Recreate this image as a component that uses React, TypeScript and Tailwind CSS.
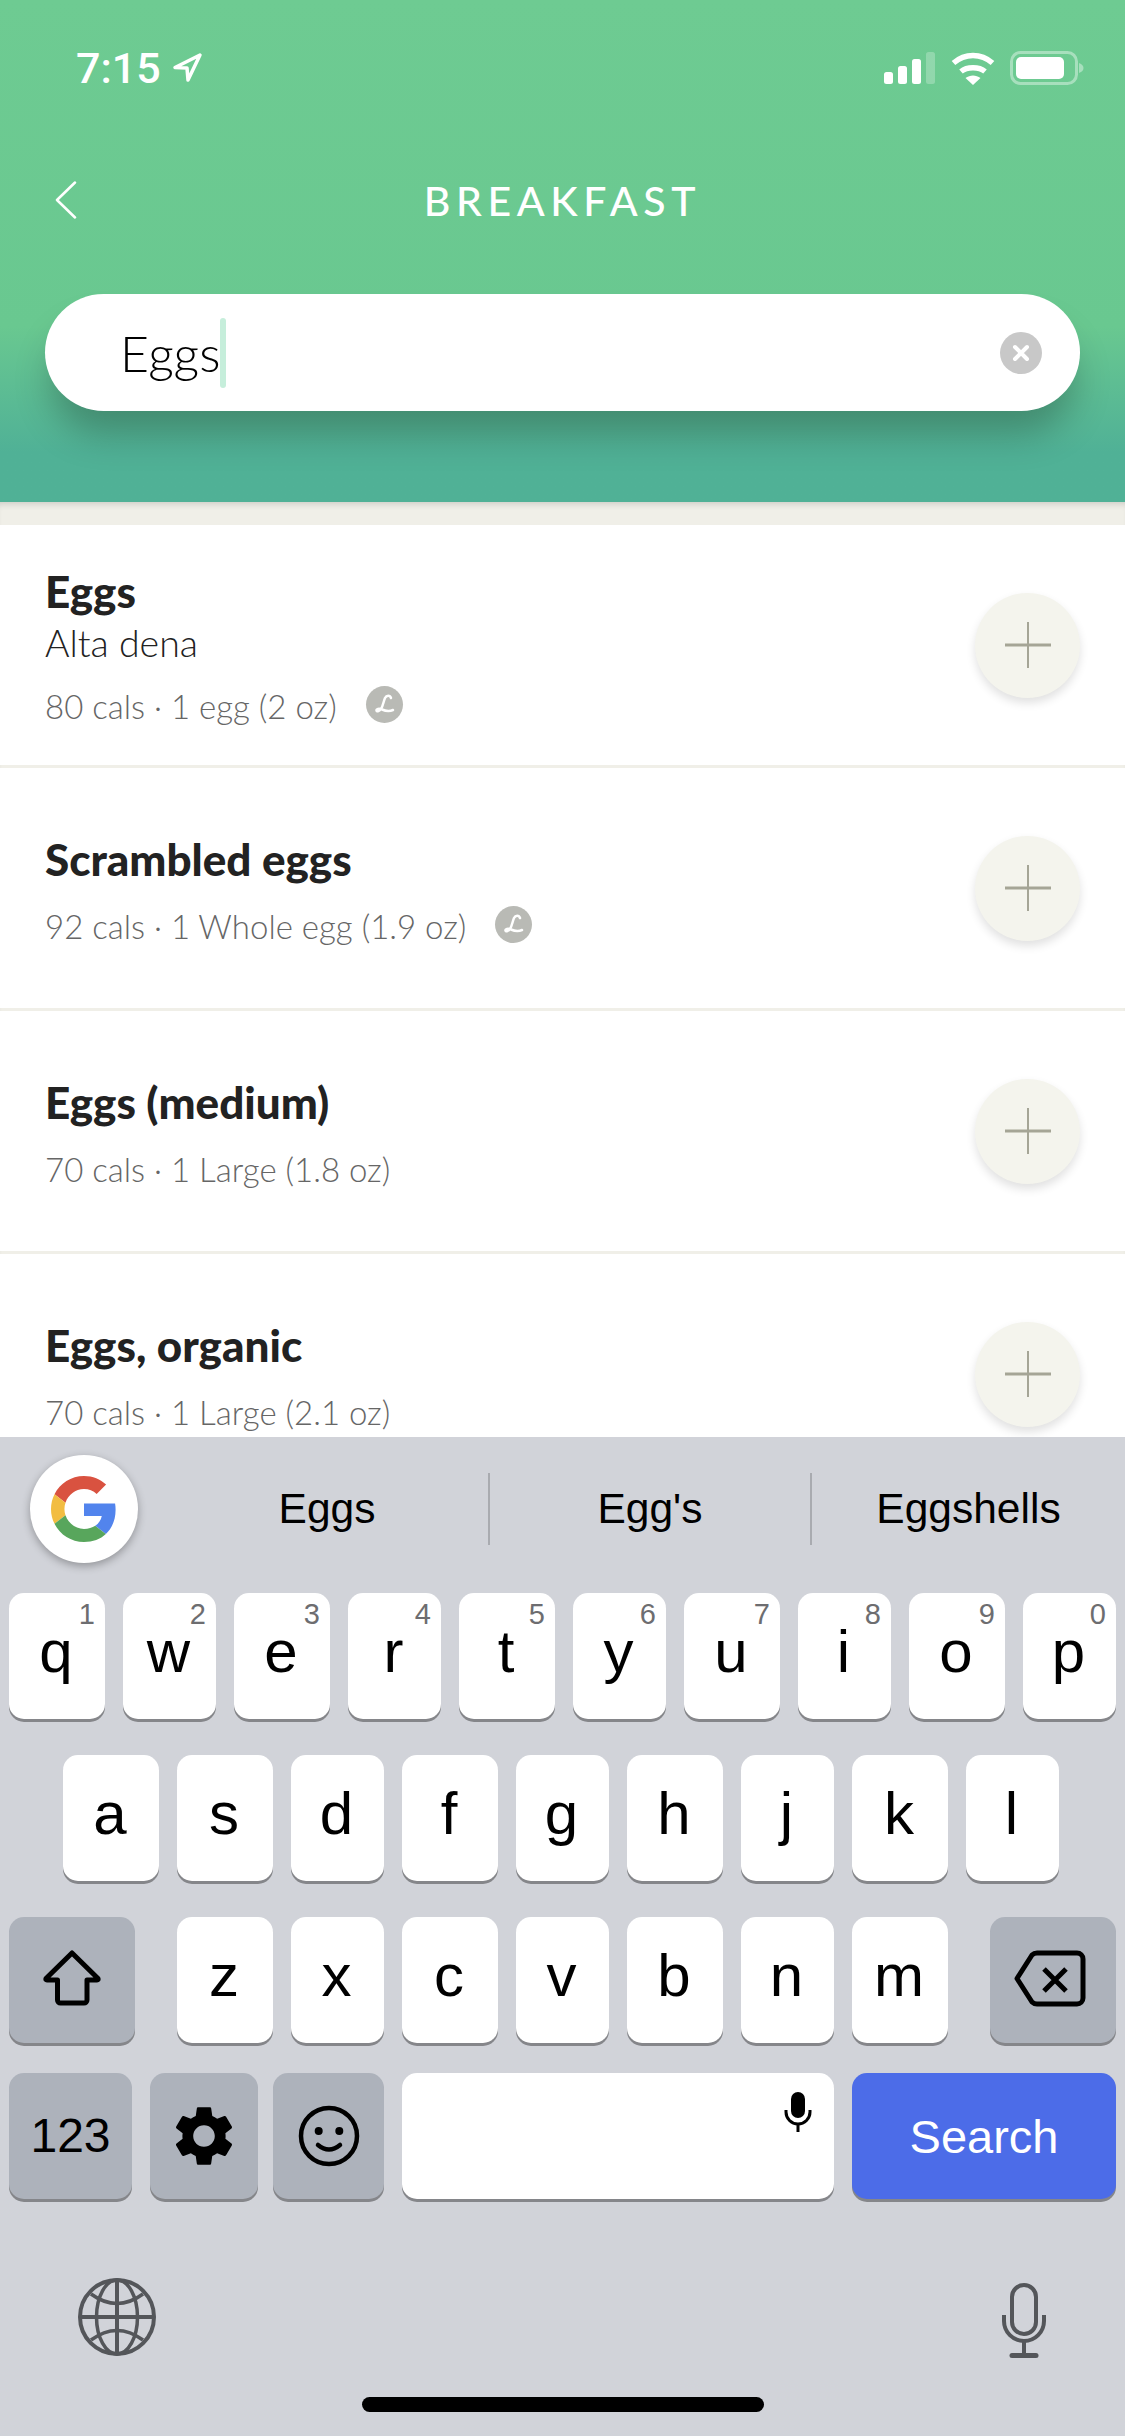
import React from 'react';

interface Food {
  name: string;
  brand?: string;
  detail: string;
  verified?: boolean;
}

const foods: Food[] = [
  { name: 'Eggs', brand: 'Alta dena', detail: '80 cals · 1 egg (2 oz)', verified: true },
  { name: 'Scrambled eggs', detail: '92 cals · 1 Whole egg (1.9 oz)', verified: true },
  { name: 'Eggs (medium)', detail: '70 cals · 1 Large (1.8 oz)' },
  { name: 'Eggs, organic', detail: '70 cals · 1 Large (2.1 oz)' },
];

const topRow: [string, string, string][] = [
  ['q', '1', 'w-[96px]'],
  ['w', '2', 'w-[93px]'],
  ['e', '3', 'w-[96px]'],
  ['r', '4', 'w-[93px]'],
  ['t', '5', 'w-[96px]'],
  ['y', '6', 'w-[93px]'],
  ['u', '7', 'w-[96px]'],
  ['i', '8', 'w-[93px]'],
  ['o', '9', 'w-[96px]'],
  ['p', '0', 'w-[93px]'],
];

const middleRow: [string, string][] = [
  ['a', 'w-[96px]'],
  ['s', 'w-[96px]'],
  ['d', 'w-[93px]'],
  ['f', 'w-[96px]'],
  ['g', 'w-[93px]'],
  ['h', 'w-[96px]'],
  ['j', 'w-[93px]'],
  ['k', 'w-[96px]'],
  ['l', 'w-[93px]'],
];

const bottomRow: [string, string][] = [
  ['z', 'w-[96px]'],
  ['x', 'w-[93px]'],
  ['c', 'w-[96px]'],
  ['v', 'w-[93px]'],
  ['b', 'w-[96px]'],
  ['n', 'w-[93px]'],
  ['m', 'w-[96px]'],
];

function StatusBar() {
  return (
    <div className="flex h-[136px] items-center justify-between pl-[76px] pr-[41px] text-white">
      <div className="flex items-center gap-[11px]">
        <span className="font-['Roboto',sans-serif] text-[43px] font-medium leading-none">7:15</span>
        <svg width="32" height="32" viewBox="0 0 32 32" fill="none" stroke="white" strokeWidth="3.5" strokeLinejoin="round">
          <path d="M28 3 3 15.5 15 16l1 12Z" />
        </svg>
      </div>
      <div className="flex items-center gap-[15px]">
        <svg width="52" height="32" viewBox="0 0 52 32" fill="white">
          <rect x="0" y="20" width="9" height="12" rx="2.5" />
          <rect x="14" y="14" width="9" height="18" rx="2.5" />
          <rect x="28" y="7" width="9" height="25" rx="2.5" />
          <rect x="42" y="0" width="9" height="32" rx="2.5" opacity="0.25" />
        </svg>
        <svg width="44" height="33" viewBox="0 0 44 33" fill="none" stroke="white" strokeWidth="5.5">
          <path d="M2.5 11C14 1 30 1 41.5 11" />
          <path d="M10 19.5c6-5 18-5 24 0" />
          <path d="M22 33 14.5 26c4.500-3.500 10.500-3.500 15 0Z" fill="white" stroke="none" />
        </svg>
        <svg width="74" height="34" viewBox="0 0 74 34" fill="none">
          <rect x="1.500" y="1.500" width="65" height="31" rx="9" stroke="white" strokeWidth="3" opacity="0.4" />
          <rect x="6" y="6" width="48" height="22" rx="5" fill="white" />
          <path d="M69 12c3 1 4.500 3 4.500 5s-1.500 4-4.500 5Z" fill="white" opacity="0.4" />
        </svg>
      </div>
    </div>
  );
}

function Header() {
  return (
    <header className="h-[502px] shrink-0 bg-linear-to-b from-[#6ecb92] via-[#69c890] via-65% to-[#50b196] to-90%">
      <StatusBar />
      <div className="grid h-[128px] grid-cols-[1fr_auto_1fr] items-center px-[55px]">
        <svg width="22" height="38" viewBox="0 0 22 38" fill="none" stroke="white" strokeWidth="2.500" strokeLinecap="round" strokeLinejoin="round">
          <path d="M20 1.500 2 19l18 17.500" />
        </svg>
        <h1 className="text-[41px] font-medium leading-none tracking-[5.6px] text-white">BREAKFAST</h1>
        <span />
      </div>
      <div className="mx-[45px] mt-[30px] flex h-[117px] items-center rounded-full bg-white pl-[75px] pr-[38px] shadow-[0_28px_36px_-6px_rgba(0,0,0,0.25)]">
        <span className="text-[50px] font-light leading-none text-black">Eggs</span>
        <span className="h-[70px] w-[6px] rounded-full bg-[#c6eedb]" />
        <span className="ml-auto flex h-[42px] w-[42px] items-center justify-center rounded-full bg-[#c8c8c8]">
          <svg width="20" height="20" viewBox="0 0 20 20" stroke="white" strokeWidth="4" strokeLinecap="round">
            <path d="M4 4l12 12M16 4 4 16" />
          </svg>
        </span>
      </div>
    </header>
  );
}

function Badge() {
  return (
    <span className="-mt-[4px] ml-[29px] flex h-[37px] w-[37px] items-center justify-center rounded-full bg-[#b9bab5]">
      <svg width="37" height="37" viewBox="0 0 37 37" fill="none" stroke="white" strokeWidth="2.500" strokeLinecap="round">
        <path d="M25 12c-1-3-4.500-3-6 0-1.500 3.500-2 8-4 11-1.500 2-4 3-4.500 1.500S13 22 16 23.500c3.500 1.500 7.500 2 11 .5" />
      </svg>
    </span>
  );
}

function FoodRow({ food }: { food: Food }) {
  return (
    <div className="relative flex h-[240px] shrink-0 items-center justify-between bg-white pl-[45px] pr-[45px]">
      <div className={`self-start ${food.brand ? 'pt-[40px]' : 'pt-[65px]'}`}>
        <div className="text-[44px] font-black leading-[52px] text-[#222222]">{food.name}</div>
        {food.brand && <div className="text-[37.5px] font-light leading-[52px] text-[#222222]">{food.brand}</div>}
        <div className={`flex h-[52px] items-center ${food.brand ? 'mt-[11px]' : 'mt-[15px]'}`}>
          <span className="text-[33px] font-light leading-none text-[#666666]">{food.detail}</span>
          {food.verified && <Badge />}
        </div>
      </div>
      <button className="flex h-[105px] w-[105px] items-center justify-center rounded-full bg-[#f4f4ed] shadow-[0_5px_10px_rgba(0,0,0,0.12)]">
        <svg width="46" height="46" viewBox="0 0 46 46" stroke="#a5a596">
          <path d="M23 0v46" strokeWidth="2" />
          <path d="M0 23h46" strokeWidth="3" />
        </svg>
      </button>
    </div>
  );
}

function GoogleButton() {
  return (
    <div className="flex h-[108px] w-[108px] shrink-0 items-center justify-center rounded-full bg-white shadow-[0_3px_8px_rgba(0,0,0,0.3)]">
      <svg width="66" height="66" viewBox="0 0 48 48">
        <path fill="#d95240" d="M24 9.500c3.540 0 6.710 1.220 9.210 3.600l6.850-6.850C35.900 2.380 30.470 0 24 0 14.620 0 6.510 5.380 2.560 13.220l7.980 6.190C12.430 13.720 17.740 9.500 24 9.500z" />
        <path fill="#5284ed" d="M46.980 24.550c0-1.570-.15-3.090-.38-4.550H24v9.020h12.940c-.58 2.960-2.260 5.480-4.780 7.180l7.730 6c4.510-4.180 7.090-10.360 7.090-17.650z" />
        <path fill="#f2bd42" d="M10.530 28.590c-.48-1.450-.76-2.990-.76-4.590s.27-3.140.76-4.590l-7.980-6.190C.92 16.460 0 20.120 0 24c0 3.880.92 7.540 2.560 10.780l7.970-6.190z" />
        <path fill="#58a65c" d="M24 48c6.480 0 11.930-2.130 15.890-5.810l-7.730-6c-2.150 1.450-4.920 2.300-8.160 2.300-6.260 0-11.570-4.220-13.470-9.910l-7.980 6.190C6.510 42.620 14.620 48 24 48z" />
      </svg>
    </div>
  );
}

function LetterKey({ letter, digit, width }: { letter: string; digit?: string; width: string }) {
  return (
    <div className={`relative flex h-[126px] ${width} items-center justify-center rounded-[15px] bg-white pb-[8px] pr-[2px] text-[60px] leading-none text-black shadow-[0_3px_0_#85868a]`}>
      {letter}
      {digit && <span className="absolute right-[10px] top-[6px] text-[29px] leading-[30px] text-[#6d6d70]">{digit}</span>}
    </div>
  );
}

function Keyboard() {
  return (
    <div className="flex h-[999px] shrink-0 flex-col bg-[#d1d3d9] font-['Liberation_Sans',Arial,sans-serif]">
      <div className="flex h-[156px] shrink-0 items-start pl-[30px] pt-[18px]">
        <GoogleButton />
        <div className="ml-[28px] flex h-[108px] flex-1 items-center text-[42.5px] leading-none text-black">
          <span className="w-[322px] text-center">Eggs</span>
          <span className="h-[72px] w-[2px] bg-[#a9abb0]" />
          <span className="w-[320px] text-center">Egg's</span>
          <span className="h-[72px] w-[2px] bg-[#a9abb0]" />
          <span className="flex-1 text-center">Eggshells</span>
        </div>
      </div>

      <div className="flex gap-[18px] pl-[9px]">
        {topRow.map(([letter, digit, width]) => (
          <LetterKey key={letter} letter={letter} digit={digit} width={width} />
        ))}
      </div>

      <div className="mt-[36px] flex gap-[18px] pl-[63px]">
        {middleRow.map(([letter, width]) => (
          <LetterKey key={letter} letter={letter} width={width} />
        ))}
      </div>

      <div className="mt-[36px] flex justify-between px-[9px]">
        <div className="flex h-[126px] w-[126px] items-center justify-center rounded-[15px] bg-[#adb2bb] pb-[4px] shadow-[0_3px_0_#85868a]">
          <svg width="58" height="56" viewBox="0 0 58 56" fill="none" stroke="black" strokeWidth="5" strokeLinejoin="round">
            <path d="M29 3 3 28.500Q2.500 30 4 30H14.500V50a3 3 0 0 0 3 3H41a3 3 0 0 0 3-3V30H54Q55.500 30 55 28.500Z" />
          </svg>
        </div>
        <div className="flex gap-[18px]">
          {bottomRow.map(([letter, width]) => (
            <LetterKey key={letter} letter={letter} width={width} />
          ))}
        </div>
        <div className="flex h-[126px] w-[126px] items-center justify-center rounded-[15px] bg-[#adb2bb] pb-[4px] pr-[6px] shadow-[0_3px_0_#85868a]">
          <svg width="72" height="57" viewBox="0 0 72 57" fill="none" stroke="black" strokeWidth="5" strokeLinejoin="round">
            <path d="M3 28.500 18 5q2-2 5-2H63a6 6 0 0 1 6 6V48a6 6 0 0 1-6 6H23q-3 0-5-2Z" />
            <path d="M30 19 52 41M52 19 30 41" />
          </svg>
        </div>
      </div>

      <div className="mt-[30px] flex gap-[18px] pl-[9px]">
        <div className="flex h-[126px] w-[123px] items-center justify-center rounded-[15px] bg-[#adb2bb] text-[48px] leading-none text-black shadow-[0_3px_0_#85868a]">123</div>
        <div className="flex h-[126px] w-[108px] items-center justify-center rounded-[15px] bg-[#adb2bb] shadow-[0_3px_0_#85868a]">
          <svg width="72" height="72" viewBox="0 0 24 24" fill="black">
            <path fillRule="evenodd" d="M19.140 12.940c.04-.3.06-.61.06-.94 0-.32-.02-.64-.07-.94l2.030-1.580c.18-.14.23-.41.12-.61l-1.920-3.320c-.12-.22-.37-.29-.59-.22l-2.390.96c-.5-.38-1.030-.7-1.620-.94l-.36-2.540c-.04-.24-.24-.41-.48-.41h-3.840c-.24 0-.43.17-.47.41l-.36 2.540c-.59.24-1.130.57-1.620.94l-2.390-.96c-.22-.08-.47 0-.59.22L2.740 8.870c-.12.21-.08.47.12.61l2.030 1.580c-.05.3-.09.63-.09.94s.02.64.07.94l-2.030 1.580c-.18.14-.23.41-.12.61l1.920 3.320c.12.22.37.29.59.22l2.390-.96c.5.38 1.030.7 1.620.94l.36 2.540c.05.24.24.41.48.41h3.840c.24 0 .44-.17.47-.41l.36-2.540c.59-.24 1.130-.56 1.620-.94l2.390.96c.22.08.47 0 .59-.22l1.920-3.320c.12-.22.07-.47-.12-.61l-2.010-1.580zM12 15.600c-1.980 0-3.600-1.620-3.600-3.600s1.620-3.600 3.600-3.600 3.600 1.620 3.600 3.600-1.620 3.600-3.600 3.600z" />
          </svg>
        </div>
        <div className="-ml-[3px] flex h-[126px] w-[111px] items-center justify-center rounded-[15px] bg-[#adb2bb] shadow-[0_3px_0_#85868a]">
          <svg width="62" height="62" viewBox="0 0 62 62" fill="none" stroke="black" strokeWidth="4.500" strokeLinecap="round">
            <circle cx="31" cy="31" r="28" />
            <circle cx="20.700" cy="26" r="4" fill="black" stroke="none" />
            <circle cx="41.300" cy="26" r="4" fill="black" stroke="none" />
            <path d="M20 40q11 9 22 0" />
          </svg>
        </div>
        <div className="relative h-[126px] w-[432px] rounded-[15px] bg-white shadow-[0_3px_0_#85868a]">
          <svg className="absolute left-[381px] top-[19px]" width="30" height="40" viewBox="0 0 30 40" fill="none" stroke="black" strokeWidth="3">
            <rect x="8" y="0" width="14" height="26" rx="7" fill="black" stroke="none" />
            <path d="M3 18v2a12 12 0 0 0 24 0v-2" />
            <path d="M15 32v8" />
          </svg>
        </div>
        <div className="flex h-[126px] w-[264px] items-center justify-center rounded-[15px] bg-[#4c6ce8] text-[47px] leading-none text-white shadow-[0_3px_0_#85868a]">Search</div>
      </div>

      <div className="mt-[79px] flex items-start justify-between pl-[78px] pr-[79px]">
        <svg width="78" height="78" viewBox="0 0 78 78" fill="none" stroke="#54565a" strokeWidth="3.500">
          <circle cx="39" cy="39" r="37" strokeWidth="4" />
          <ellipse cx="39" cy="39" rx="20.500" ry="37" />
          <path d="M39 2v74M2 39h74" strokeWidth="4" />
          <path d="M13 16q26 19 52 0M13 62q26-19 52 0" />
        </svg>
        <svg className="mt-[5px]" width="44" height="75" viewBox="0 0 44 75" fill="none" stroke="#54565a" strokeWidth="4">
          <rect x="10" y="2" width="24" height="49" rx="12" />
          <path d="M2 32v6a20 20 0 0 0 40 0v-6" />
          <path d="M22 58v13" />
          <path d="M10 72.500h24" strokeWidth="5" strokeLinecap="round" />
        </svg>
      </div>
      <div className="mx-auto mt-[39px] h-[15px] w-[402px] rounded-full bg-black" />
    </div>
  );
}

export default function App() {
  return (
    <div className="flex h-[2436px] w-[1125px] flex-col overflow-hidden bg-white font-['Lato',sans-serif]">
      <Header />
      <div className="flex min-h-0 flex-1 flex-col gap-[3px] overflow-hidden bg-[#f0efe8] pt-[23px] shadow-[inset_0_6px_6px_-4px_rgba(0,0,0,0.15)]">
        {foods.map((food) => (
          <FoodRow key={food.name} food={food} />
        ))}
      </div>
      <Keyboard />
    </div>
  );
}
